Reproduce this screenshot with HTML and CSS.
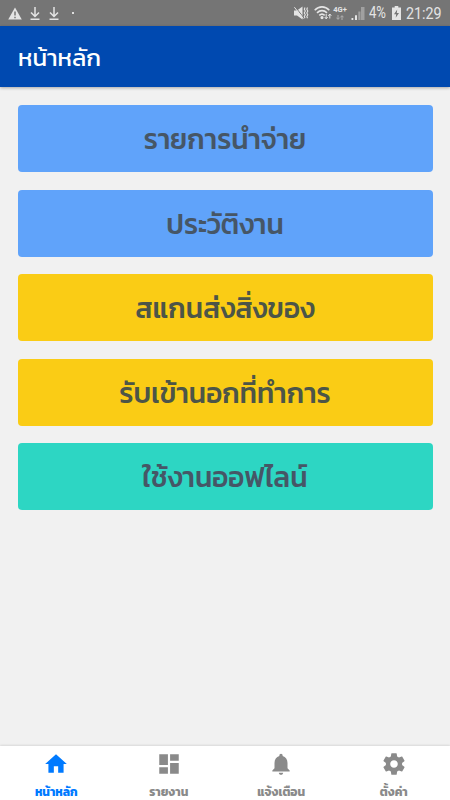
FILE: index.html
```html
<!DOCTYPE html>
<html lang="th">
  <head>
    <meta charset="UTF-8" />
    <meta name="viewport" content="width=device-width, initial-scale=1.0" />
    <title>หน้าหลัก</title>
    <link rel="stylesheet" href="styles.css">
  </head>
  <body>
    <!-- Status bar -->
    <div class="status-bar">
      <div class="status-left">
        <svg class="icon-warning" width="14" height="13" viewBox="0 0 14 13">
          <path d="M7 0.5L13.8 12.5H0.2z" fill="#e4e4e4" />
          <path d="M7 4.5v4M7 9.7v1.5" stroke="#757575" stroke-width="1.5" />
        </svg>
        <svg class="icon-download" width="10" height="13" viewBox="0 0 10 13" fill="none" stroke="#e4e4e4" stroke-width="1.5">
          <path d="M5 0v9.5M1 5.5l4 4 4-4M0.5 12.2h9" />
        </svg>
        <svg class="icon-download" width="10" height="13" viewBox="0 0 10 13" fill="none" stroke="#e4e4e4" stroke-width="1.5">
          <path d="M5 0v9.5M1 5.5l4 4 4-4M0.5 12.2h9" />
        </svg>
        <span class="dot"></span>
      </div>
      <div class="status-right">
        <svg width="15" height="14" viewBox="0 0 15 14">
          <path d="M0 4.5h3L8.5 0.5v13L3 9.5H0z" fill="#e4e4e4" />
          <path d="M1.2 0.8l9 11.5" stroke="#757575" stroke-width="1" />
          <path d="M0.4 1.2l9 11.5" stroke="#e4e4e4" stroke-width="1" />
          <path d="M11 1.5l-.7 1.8 1 1.8-1 1.8 1 1.8-1 1.8.7 1.8M13.5 1.5l-.7 1.8 1 1.8-1 1.8 1 1.8-1 1.8.7 1.8" fill="none" stroke="#e4e4e4" stroke-width="1.1" />
        </svg>
        <svg class="icon-wifi" width="18" height="14" viewBox="0 0 18 14" fill="none" stroke="#e4e4e4" stroke-width="1.6">
          <path d="M0.7 4.2C5-0.2 11-0.2 15.3 4.2M3 6.9c3-3 7-3 10 0M5.3 9.4c1.7-1.6 3.7-1.6 5.4 0" />
          <circle cx="8" cy="11.6" r="0.8" fill="#e4e4e4" />
          <path d="M12.2 8v5M10.7 11l1.5 1.8 1.5-1.8M15.8 12.5V8M14.3 9.8L15.8 8l1.5 1.8" stroke-width="1" />
        </svg>
        <span class="network">
          <span>4G+</span>
          <svg width="8" height="5" viewBox="0 0 8 5" fill="none" stroke="#b0b0b0" stroke-width="1">
            <path d="M2 0v4M0.5 2.7L2 4.4l1.5-1.7M6 5V1M4.5 2.3L6 0.6l1.5 1.7" />
          </svg>
        </span>
        <svg class="icon-signal" width="14" height="13" viewBox="0 0 14 13">
          <path d="M0.5 11h1.8v2H0.5zM4 8.2h2V13H4z" fill="#e4e4e4" />
          <path d="M7.3 4.4h2.2V13H7.3zM10 0h3.5v13H10z" fill="#a0a0a0" />
        </svg>
        <span class="battery-text">4%</span>
        <svg class="icon-battery" width="9" height="14" viewBox="0 0 9 14">
          <path d="M2.7 0h3.6v1.5H9V14H0V1.5h2.7z" fill="#e4e4e4" />
          <path d="M5.2 3.5L2 8.3h2.2l-.5 3.5L7 7H4.8z" fill="#757575" />
        </svg>
        <span class="clock">21:29</span>
      </div>
    </div>

    <header>
      <h1>หน้าหลัก</h1>
    </header>

    <main>
      <button type="button" class="menu-button blue">รายการนำจ่าย</button>
      <button type="button" class="menu-button blue">ประวัติงาน</button>
      <button type="button" class="menu-button yellow">สแกนส่งสิ่งของ</button>
      <button type="button" class="menu-button yellow">รับเข้านอกที่ทำการ</button>
      <button type="button" class="menu-button teal">ใช้งานออฟไลน์</button>
    </main>

    <!-- Bottom tabs -->
    <nav>
      <a class="tab active">
        <svg width="26" height="26" viewBox="0 0 24 24"><path d="M10 20v-6h4v6h5v-8h3L12 3 2 12h3v8z" /></svg>
        <span>หน้าหลัก</span>
      </a>
      <a class="tab">
        <svg width="26" height="26" viewBox="0 0 24 24"><path d="M3 13h8V3H3v10zm0 8h8v-6H3v6zm10 0h8V11h-8v10zm0-18v6h8V3h-8z" /></svg>
        <span>รายงาน</span>
      </a>
      <a class="tab">
        <svg width="26" height="26" viewBox="0 0 24 24"><path d="M12 22c1.1 0 2-.9 2-2h-4c0 1.1.89 2 2 2zm6-6v-5c0-3.07-1.64-5.64-4.5-6.32V4c0-.83-.67-1.5-1.5-1.5s-1.5.67-1.5 1.5v.68C7.63 5.36 6 7.92 6 11v5l-2 2v1h16v-1l-2-2z" /></svg>
        <span>แจ้งเตือน</span>
      </a>
      <a class="tab">
        <svg width="26" height="26" viewBox="0 0 24 24"><path d="M19.43 12.98c.04-.32.07-.64.07-.98s-.03-.66-.07-.98l2.11-1.65c.19-.15.24-.42.12-.64l-2-3.46c-.12-.22-.39-.3-.61-.22l-2.49 1c-.52-.4-1.08-.73-1.69-.98l-.38-2.65C14.46 2.18 14.25 2 14 2h-4c-.25 0-.46.18-.49.42l-.38 2.65c-.61.25-1.17.59-1.69.98l-2.49-1c-.23-.09-.49 0-.61.22l-2 3.46c-.13.22-.07.49.12.64l2.11 1.65c-.04.32-.07.65-.07.98s.03.66.07.98l-2.11 1.65c-.19.15-.24.42-.12.64l2 3.46c.12.22.39.3.61.22l2.49-1c.52.4 1.08.73 1.69.98l.38 2.65c.03.24.24.42.49.42h4c.25 0 .46-.18.49-.42l.38-2.65c.61-.25 1.17-.59 1.69-.98l2.49 1c.23.09.49 0 .61-.22l2-3.46c.12-.22.07-.49-.12-.64l-2.11-1.65zM12 15.5c-1.93 0-3.5-1.57-3.5-3.5s1.57-3.5 3.5-3.5 3.5 1.57 3.5 3.5-1.57 3.5-3.5 3.5z" /></svg>
        <span>ตั้งค่า</span>
      </a>
    </nav>
  </body>
</html>
```
FILE: styles.css
```css
* {
  box-sizing: border-box;
}

body {
  margin: 0;
  height: 100vh;
  display: flex;
  flex-direction: column;
  overflow: hidden;
  background-color: #f1f1f1;
  font-family: Kanit, Prompt, "Noto Sans Thai", "Noto Sans", sans-serif;
}

/* Status bar */
.status-bar {
  height: 26px;
  flex: none;
  display: flex;
  justify-content: space-between;
  padding: 0 9px 0 8px;
  background-color: #757575;
  color: #e4e4e4;
  font-family: Roboto, sans-serif;
}

.status-left,
.status-right {
  display: flex;
  align-items: center;
}

.icon-download {
  margin-left: 8px;
}

.icon-download + .icon-download {
  margin-left: 9px;
}

.dot {
  width: 2px;
  height: 2px;
  margin-left: 13px;
  background-color: #dedede;
}

.icon-wifi {
  margin-left: 5px;
}

.network {
  display: flex;
  flex-direction: column;
  align-items: center;
  gap: 2px;
  width: 14px;
  margin-left: 1px;
  font-size: 7.5px;
  font-weight: 700;
  line-height: 7px;
}

.icon-signal {
  margin-left: 4px;
}

.battery-text,
.clock {
  font-size: 17px;
  line-height: 28px;
  white-space: nowrap;
  transform: scaleX(0.84);
  transform-origin: left;
}

.battery-text {
  width: 19px;
  margin-left: 4px;
  font-size: 16px;
  transform: scaleX(0.82);
}

.icon-battery {
  margin-left: 4px;
}

.clock {
  width: 35px;
  margin-left: 5px;
}

/* Header */
header {
  height: 61px;
  flex: none;
  display: flex;
  align-items: center;
  padding: 1px 0 0 18px;
  background-color: #0049b0;
  color: #fff;
  box-shadow: 0 1px 3px rgba(0, 0, 0, 0.3);
}

h1 {
  margin: 0;
  font-size: 24px;
  font-weight: 400;
}

/* Menu */
main {
  flex: 1;
  display: flex;
  flex-direction: column;
  gap: 17.6px;
  padding: 18px 17.5px;
}

.menu-button {
  height: 67px;
  flex: none;
  padding: 1px 0 0;
  border: none;
  border-radius: 4px;
  color: #465666;
  font-family: inherit;
  font-size: 28px;
  font-weight: 500;
  white-space: nowrap;
}

.blue {
  background-color: #60a3fa;
}

.yellow {
  background-color: #facc15;
  color: #4c5548;
}

.teal {
  background-color: #2dd6c3;
}

/* Bottom tabs */
nav {
  height: 54px;
  flex: none;
  display: grid;
  grid-template-columns: repeat(4, 1fr);
  background-color: #fff;
  box-shadow: 0 -1px 2px rgba(0, 0, 0, 0.1);
}

.tab {
  display: flex;
  flex-direction: column;
  align-items: center;
  padding-top: 5px;
  color: #8a8a8a;
  font-size: 12px;
  font-weight: 700;
  line-height: 30px;
}

.tab svg {
  flex: none;
  fill: currentColor;
}

.tab.active {
  color: #007aff;
}
```
